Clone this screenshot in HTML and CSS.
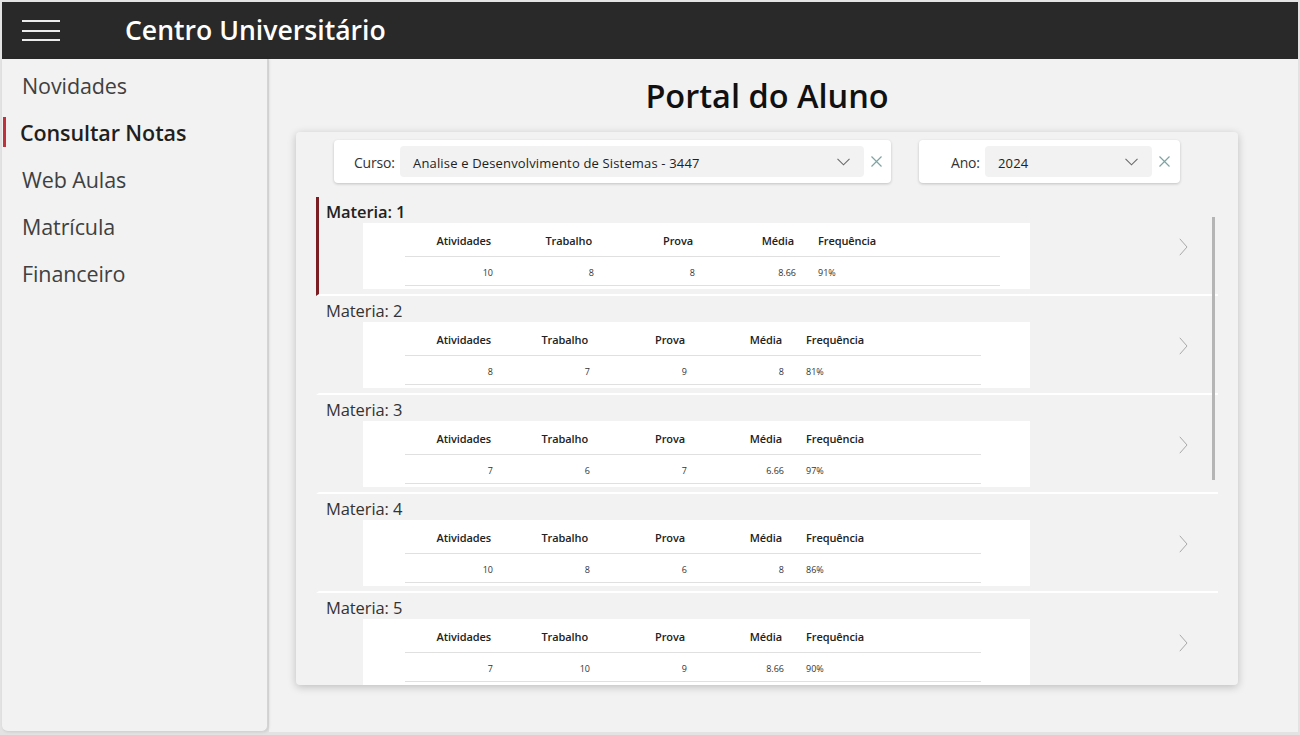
FILE: index.html
```html
<!DOCTYPE html>
<html lang="pt">
<head>
<meta charset="utf-8">
<title>Centro Universitário</title>
<link rel="stylesheet" href="styles.css">
</head>
<body>
<div class="app">
  <header class="topbar">
    <div class="hamburger"><span></span><span></span><span></span></div>
    <div class="brand">Centro Universitário</div>
  </header>
  <div class="body">
    <nav class="sidebar">
      <div class="nav-item">Novidades</div>
      <div class="nav-item active"><span class="nav-bar"></span>Consultar Notas</div>
      <div class="nav-item">Web Aulas</div>
      <div class="nav-item">Matrícula</div>
      <div class="nav-item">Financeiro</div>
    </nav>
    <main class="main">
      <div class="column">
        <h1 class="page-title">Portal do Aluno</h1>
        <section class="card">
          <div class="filters">
            <div class="filter filter-curso">
              <span class="filter-label">Curso:</span>
              <div class="dropdown dd-curso">
                <span class="dd-text">Analise e Desenvolvimento de Sistemas - 3447</span>
                <svg class="dd-chev" width="13" height="8" viewBox="0 0 13 8"><path d="M0.5 0.8 L6.5 6.8 L12.5 0.8" fill="none" stroke="#6a6a6a" stroke-width="1.1"/></svg>
              </div>
              <svg class="clear" width="11" height="11" viewBox="0 0 11 11"><path d="M0.5 0.5 L10.5 10.5 M10.5 0.5 L0.5 10.5" fill="none" stroke="#7fa3a3" stroke-width="1.2"/></svg>
            </div>
            <div class="filter filter-ano">
              <span class="filter-label">Ano:</span>
              <div class="dropdown dd-ano">
                <span class="dd-text">2024</span>
                <svg class="dd-chev" width="13" height="8" viewBox="0 0 13 8"><path d="M0.5 0.8 L6.5 6.8 L12.5 0.8" fill="none" stroke="#6a6a6a" stroke-width="1.1"/></svg>
              </div>
              <svg class="clear" width="11" height="11" viewBox="0 0 11 11"><path d="M0.5 0.5 L10.5 10.5 M10.5 0.5 L0.5 10.5" fill="none" stroke="#7fa3a3" stroke-width="1.2"/></svg>
            </div>
          </div>
          <div class="gallery">
            <div class="scrollbar"></div>

            <div class="row selected">
              <div class="row-main">
                <div class="row-title">Materia: 1</div>
                <div class="grade-box">
                  <div class="tbl wide">
                    <div class="th">Atividades</div><div class="th">Trabalho</div><div class="th">Prova</div><div class="th">Média</div><div class="th th-left">Frequência</div>
                    <div class="td">10</div><div class="td">8</div><div class="td">8</div><div class="td">8.66</div><div class="td td-left">91%</div>
                  </div>
                </div>
              </div>
              <svg class="row-chev" width="9" height="18" viewBox="0 0 9 18"><path d="M0.8 0.8 L8 9 L0.8 17.2" fill="none" stroke="#a8a8a8" stroke-width="1"/></svg>
            </div>

            <div class="row">
              <div class="row-main">
                <div class="row-title">Materia: 2</div>
                <div class="grade-box">
                  <div class="tbl">
                    <div class="th">Atividades</div><div class="th">Trabalho</div><div class="th">Prova</div><div class="th">Média</div><div class="th th-left">Frequência</div>
                    <div class="td">8</div><div class="td">7</div><div class="td">9</div><div class="td">8</div><div class="td td-left">81%</div>
                  </div>
                </div>
              </div>
              <svg class="row-chev" width="9" height="18" viewBox="0 0 9 18"><path d="M0.8 0.8 L8 9 L0.8 17.2" fill="none" stroke="#a8a8a8" stroke-width="1"/></svg>
            </div>

            <div class="row">
              <div class="row-main">
                <div class="row-title">Materia: 3</div>
                <div class="grade-box">
                  <div class="tbl">
                    <div class="th">Atividades</div><div class="th">Trabalho</div><div class="th">Prova</div><div class="th">Média</div><div class="th th-left">Frequência</div>
                    <div class="td">7</div><div class="td">6</div><div class="td">7</div><div class="td">6.66</div><div class="td td-left">97%</div>
                  </div>
                </div>
              </div>
              <svg class="row-chev" width="9" height="18" viewBox="0 0 9 18"><path d="M0.8 0.8 L8 9 L0.8 17.2" fill="none" stroke="#a8a8a8" stroke-width="1"/></svg>
            </div>

            <div class="row">
              <div class="row-main">
                <div class="row-title">Materia: 4</div>
                <div class="grade-box">
                  <div class="tbl">
                    <div class="th">Atividades</div><div class="th">Trabalho</div><div class="th">Prova</div><div class="th">Média</div><div class="th th-left">Frequência</div>
                    <div class="td">10</div><div class="td">8</div><div class="td">6</div><div class="td">8</div><div class="td td-left">86%</div>
                  </div>
                </div>
              </div>
              <svg class="row-chev" width="9" height="18" viewBox="0 0 9 18"><path d="M0.8 0.8 L8 9 L0.8 17.2" fill="none" stroke="#a8a8a8" stroke-width="1"/></svg>
            </div>

            <div class="row">
              <div class="row-main">
                <div class="row-title">Materia: 5</div>
                <div class="grade-box">
                  <div class="tbl">
                    <div class="th">Atividades</div><div class="th">Trabalho</div><div class="th">Prova</div><div class="th">Média</div><div class="th th-left">Frequência</div>
                    <div class="td">7</div><div class="td">10</div><div class="td">9</div><div class="td">8.66</div><div class="td td-left">90%</div>
                  </div>
                </div>
              </div>
              <svg class="row-chev" width="9" height="18" viewBox="0 0 9 18"><path d="M0.8 0.8 L8 9 L0.8 17.2" fill="none" stroke="#a8a8a8" stroke-width="1"/></svg>
            </div>

          </div>
        </section>
      </div>
    </main>
  </div>
</div>
</body>
</html>
```
FILE: styles.css
```css
* { box-sizing: border-box; }
html, body { margin: 0; padding: 0; }
body {
  width: 1300px;
  height: 735px;
  overflow: hidden;
  background: #e3e3e3;
  font-family: "Open Sans", "Noto Sans", sans-serif;
  color: #333;
}
.app {
  width: 1300px;
  height: 735px;
  padding: 2px 2px 3px 2px;
  display: flex;
  flex-direction: column;
}
.topbar {
  height: 57px;
  flex: none;
  background: #292929;
  display: flex;
  align-items: center;
}
.hamburger {
  margin-left: 20px;
  width: 38px;
  height: 21px;
  display: flex;
  flex-direction: column;
  justify-content: space-between;
}
.hamburger span {
  display: block;
  height: 2px;
  background: #ececec;
}
.brand {
  margin-left: 65px;
  color: #fff;
  font-size: 26.6px;
  font-weight: 600;
  letter-spacing: 0;
  line-height: 1;
  padding-bottom: 1px;
}
.body {
  flex: 1;
  display: flex;
  min-height: 0;
}
.sidebar {
  width: 266px;
  flex: none;
  background: #f2f2f2;
  border-right: 1px solid #d4d4d4;
  border-bottom: 1px solid #d4d4d4;
  border-radius: 0 0 6px 6px;
  box-shadow: 1px 0 3px rgba(0,0,0,0.12);
  padding-top: 3px;
  position: relative;
  z-index: 1;
}
.nav-item {
  height: 47px;
  display: flex;
  align-items: center;
  padding-left: 20px;
  font-size: 21.5px;
  color: #404040;
  letter-spacing: -0.1px;
}
.nav-item.active {
  padding-left: 1px;
  font-weight: 600;
  color: #1f1f1f;
}
.nav-bar {
  width: 3px;
  height: 30px;
  background: #c0313b;
  margin-right: 14px;
  margin-top: -2px;
}
.main {
  flex: 1;
  background: #f2f2f2;
  margin-left: 1px;
  padding-left: 27px;
}
.column {
  width: 942px;
  display: flex;
  flex-direction: column;
}
.page-title {
  margin: 0;
  padding-top: 17px;
  height: 73px;
  text-align: center;
  font-size: 32.5px;
  line-height: 40px;
  font-weight: 600;
  color: #111;
  letter-spacing: 0;
}
.card {
  height: 553px;
  background: #f2f2f2;
  border-radius: 4px;
  box-shadow: 0 2px 9px rgba(0,0,0,0.22);
  padding: 8px 20px 0 20px;
  display: flex;
  flex-direction: column;
  overflow: hidden;
}
.filters {
  display: flex;
  gap: 28px;
  padding-left: 18px;
  height: 43px;
  flex: none;
}
.filter {
  height: 43px;
  background: #fff;
  border-radius: 4px;
  box-shadow: 0 1px 3px rgba(0,0,0,0.2);
  display: flex;
  align-items: center;
}
.filter-curso { width: 557px; padding-left: 20px; }
.filter-ano { width: 261px; padding-left: 32px; }
.filter-label {
  font-size: 14px;
  color: #333;
  width: 46px;
  flex: none;
  letter-spacing: -0.2px;
  padding-top: 1px;
}
.filter-ano .filter-label { width: 34px; }
.dropdown {
  height: 31px;
  background: #f2f2f2;
  border-radius: 4px;
  display: flex;
  align-items: center;
  padding-left: 13px;
  padding-right: 14px;
}
.dd-curso { width: 464px; }
.dd-ano { width: 167px; }
.dd-text {
  flex: 1;
  font-size: 13px;
  color: #222;
  letter-spacing: 0.16px;
  white-space: nowrap;
  padding-top: 3px;
}
.dd-chev { flex: none; }
.clear { margin-left: 7px; flex: none; }
.gallery {
  margin-top: 14px;
  flex: 1;
  position: relative;
  overflow: hidden;
}
.scrollbar {
  position: absolute;
  right: 3px;
  top: 20px;
  width: 3px;
  height: 263px;
  background: #b5b5b5;
  z-index: 2;
}
.row {
  height: 99px;
  border-left: 3px solid transparent;
  border-bottom: 2px solid #fff;
  display: flex;
  align-items: center;
}
.row.selected { border-left-color: #7a1e24; }
.row-main {
  flex: 1;
  align-self: flex-start;
  padding-top: 4px;
}
.row-title {
  padding-left: 7px;
  font-size: 16.5px;
  line-height: 22px;
  color: #333;
  letter-spacing: -0.1px;
}
.row.selected .row-title { font-weight: 600; color: #222; }
.grade-box {
  margin-left: 44px;
  width: 667px;
  height: 66px;
  background: #fff;
  padding-left: 42px;
}
.tbl {
  width: 576px;
  display: grid;
  grid-template-columns: 92px 97px 97px 97px 193px;
  grid-template-rows: 34px 29px;
}
.tbl.wide {
  width: 595px;
  grid-template-columns: 92px 101px 101px 101px 200px;
}
.th {
  font-size: 11px;
  font-weight: 600;
  color: #222;
  text-align: right;
  padding-right: 6px;
  padding-top: 10px;
  border-bottom: 1px solid #e0e0e0;
  letter-spacing: -0.1px;
}
.td {
  font-size: 9px;
  color: #333;
  text-align: right;
  padding-right: 4px;
  padding-top: 9px;
  border-bottom: 1px solid #e0e0e0;
}
.th-left, .td-left { text-align: left; padding-left: 18px; padding-right: 0; }
.row-chev {
  flex: none;
  margin-right: 30px;
  margin-top: 2px;
}
```
